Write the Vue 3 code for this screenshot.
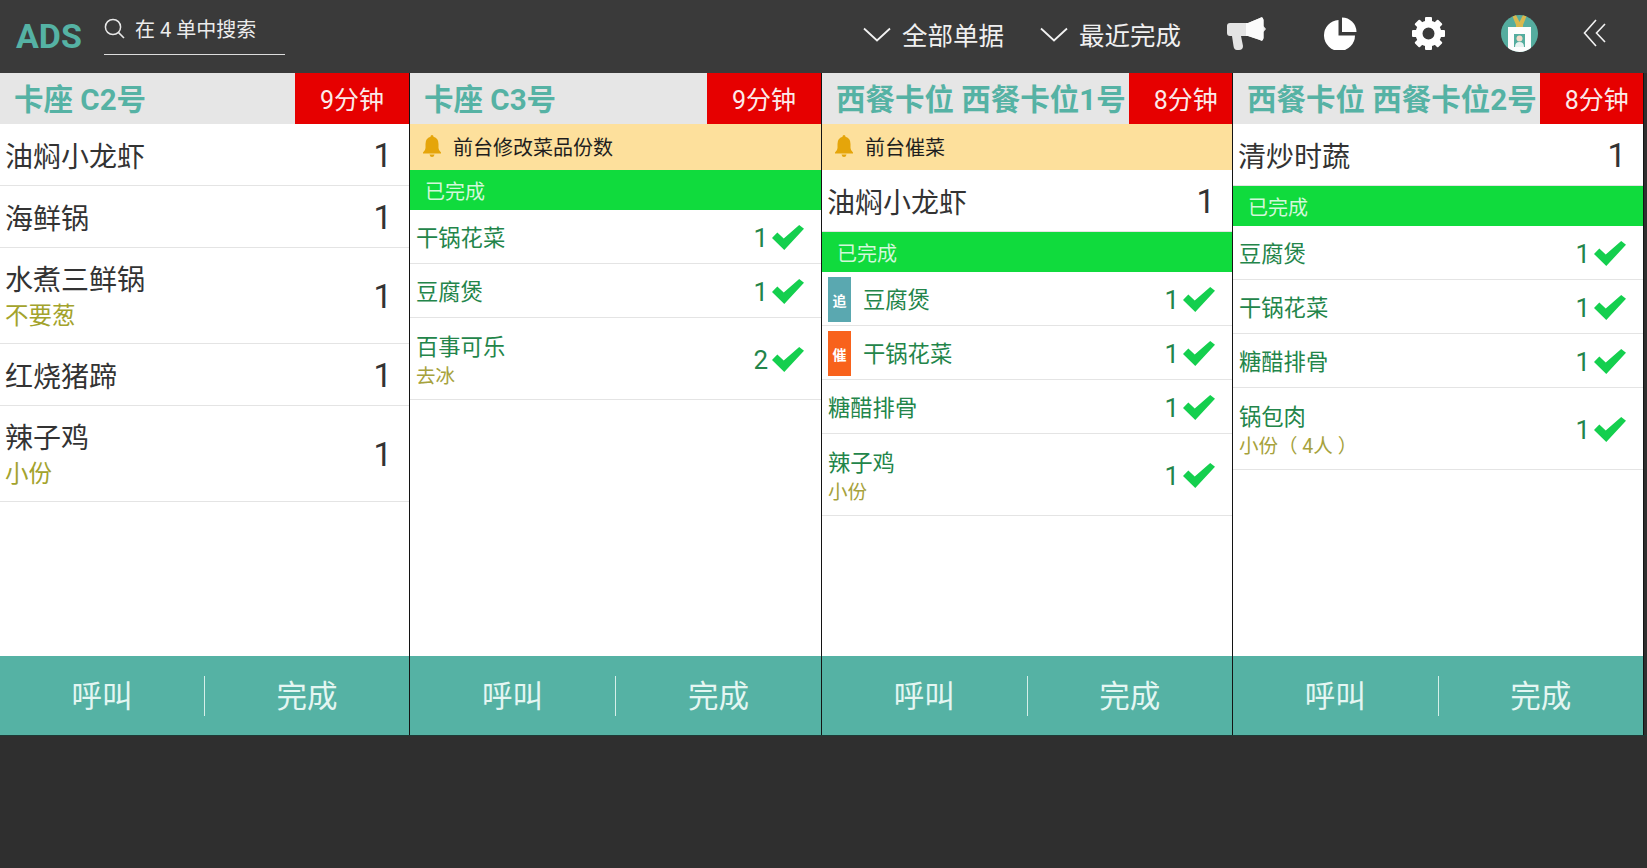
<template>
  <div class="page">
    <header class="topbar">
      <div class="logo">ADS</div>
      <div class="search">
        <svg class="search-icon" width="21" height="22" viewBox="0 0 21 22">
          <circle cx="9" cy="9" r="7.6" fill="none" stroke="#e8e8e8" stroke-width="1.5" />
          <path d="M14.6 14.6 L20 20" stroke="#e8e8e8" stroke-width="1.6" fill="none" />
        </svg>
        <span>在 4 单中搜索</span>
      </div>
      <div class="filters">
        <div class="filter" v-for="f in filters" :key="f">
          <svg width="28" height="15" viewBox="0 0 28 15">
            <path d="M1 1.5 L14 13.5 L27 1.5" fill="none" stroke="#f2f2f2" stroke-width="1.8" />
          </svg>
          <span>{{ f }}</span>
        </div>
      </div>
      <div class="tools">
        <svg class="megaphone" width="40" height="33" viewBox="0 0 40 33">
          <path d="M1 9 Q1 6 4 6 L22 6 L34 1 Q37 -1 37.500 3 L37.500 9 L40 12 L37.500 15 L37.500 21 Q37 25 34 23 L22 19 L15 19 L17 29 Q17 33 13 33 L11 33 Q8 33 7.500 29 L6 19 L4 19 Q1 19 1 16 Z" fill="#e4e4e4" />
          <path d="M20 6 L22 6 L34 1 Q37 -1 37.500 3 L37.500 21 Q37 25 34 23 L22 19 L20 19 Z" fill="#fbfbfb" />
        </svg>
        <svg class="pie" width="33" height="33" viewBox="0 0 33 33">
          <path d="M14.500 3 L14.500 18.500 L31 18.500 A15.500 15.500 0 1 1 14.500 3 Z" fill="#fff" />
          <path d="M18 0.500 A14.500 14.500 0 0 1 32.500 15 L18 15 Z" fill="#fff" />
        </svg>
        <svg class="gear" width="33" height="33" viewBox="0 0 33 33">
          <circle cx="16.500" cy="16.500" r="9.500" fill="none" stroke="#fff" stroke-width="7" />
          <rect
            v-for="a in gearTeeth"
            :key="a"
            x="13"
            y="0"
            width="7"
            height="7"
            rx="1"
            fill="#fff"
            :transform="`rotate(${a} 16.500 16.500)`"
          />
        </svg>
        <svg class="badge" width="37" height="37" viewBox="0 0 37 37">
          <defs>
            <clipPath id="badge-clip"><circle cx="18.500" cy="18.500" r="18.500" /></clipPath>
          </defs>
          <g clip-path="url(#badge-clip)">
            <rect width="37" height="37" fill="#55ad9f" />
            <path d="M11 0 L15 10 L15 13 L22 13 L22 10 L26 0 L22 0 L18.500 7 L15 0 Z" fill="#d9b84e" />
            <rect x="7" y="12" width="23" height="27" fill="#fdfdfd" />
            <rect x="13" y="19" width="11" height="13" fill="#55ad9f" />
            <circle cx="18.500" cy="23.500" r="3" fill="#f3dcc8" />
            <path d="M14 32 Q14 27 18.500 27 Q23 27 23 32 Z" fill="#e8f3f1" />
          </g>
        </svg>
        <svg class="collapse" width="23" height="28" viewBox="0 0 23 28">
          <path d="M13 1 L1.500 14 L13 27 M22 5 L13.500 14 L22 23" fill="none" stroke="#f2f2f2" stroke-width="1.6" />
        </svg>
      </div>
    </header>

    <main class="columns">
      <section class="order" v-for="order in orders" :key="order.title">
        <div class="order-head">
          <div class="order-title">{{ order.title }}</div>
          <div class="order-time">{{ order.time }}</div>
        </div>

        <div class="order-body">
          <div class="notice" v-if="order.notice">
            <svg width="18" height="22" viewBox="0 0 18 22">
              <path d="M9 0 Q10.500 0 10.500 1.800 Q15.500 3 15.500 9 L15.500 13 Q15.500 15.500 18 17.500 L18 18.500 L0 18.500 L0 17.500 Q2.500 15.500 2.500 13 L2.500 9 Q2.500 3 7.500 1.800 Q7.500 0 9 0 Z" fill="#e5a50a" />
              <path d="M6.500 19.500 L11.500 19.500 Q11 22 9 22 Q7 22 6.500 19.500 Z" fill="#e5a50a" />
            </svg>
            <span>{{ order.notice }}</span>
          </div>

          <div class="row big" v-for="item in order.pending" :key="item.name" :class="{ 'has-note': item.note }">
            <div class="row-text">
              <div class="row-name">{{ item.name }}</div>
              <div class="row-note" v-if="item.note">{{ item.note }}</div>
            </div>
            <div class="row-count">{{ item.count }}</div>
          </div>

          <template v-if="order.done">
            <div class="done-bar">已完成</div>
            <div class="row small" v-for="item in order.done" :key="item.name" :class="{ 'has-note': item.note }">
              <span class="tag" v-if="item.tag" :class="item.tagClass">{{ item.tag }}</span>
              <div class="row-text">
                <div class="row-name">{{ item.name }}</div>
                <div class="row-note" v-if="item.note">{{ item.note }}</div>
              </div>
              <div class="row-count">{{ item.count }}</div>
              <svg class="check" width="32" height="25" viewBox="0 0 30 23" preserveAspectRatio="none">
                <path d="M0 12 L5 7 L11 12.500 L25.500 0 L30 3.500 L11.500 23 Z" fill="#14cf4e" />
              </svg>
            </div>
          </template>
        </div>

        <div class="order-foot">
          <button class="foot-btn">呼叫</button>
          <span class="foot-divider"></span>
          <button class="foot-btn">完成</button>
        </div>
      </section>
    </main>
  </div>
</template>

<script setup>
const filters = ['全部单据', '最近完成']
const gearTeeth = [0, 45, 90, 135, 180, 225, 270, 315]

const orders = [
  {
    title: '卡座 C2号',
    time: '9分钟',
    pending: [
      { name: '油焖小龙虾', count: 1 },
      { name: '海鲜锅', count: 1 },
      { name: '水煮三鲜锅', note: '不要葱', count: 1 },
      { name: '红烧猪蹄', count: 1 },
      { name: '辣子鸡', note: '小份', count: 1 },
    ],
  },
  {
    title: '卡座 C3号',
    time: '9分钟',
    notice: '前台修改菜品份数',
    pending: [],
    done: [
      { name: '干锅花菜', count: 1 },
      { name: '豆腐煲', count: 1 },
      { name: '百事可乐', note: '去冰', count: 2 },
    ],
  },
  {
    title: '西餐卡位 西餐卡位1号',
    time: '8分钟',
    notice: '前台催菜',
    pending: [{ name: '油焖小龙虾', count: 1 }],
    done: [
      { name: '豆腐煲', count: 1, tag: '追', tagClass: 'tag-add' },
      { name: '干锅花菜', count: 1, tag: '催', tagClass: 'tag-rush' },
      { name: '糖醋排骨', count: 1 },
      { name: '辣子鸡', note: '小份', count: 1 },
    ],
  },
  {
    title: '西餐卡位 西餐卡位2号',
    time: '8分钟',
    pending: [{ name: '清炒时蔬', count: 1 }],
    done: [
      { name: '豆腐煲', count: 1 },
      { name: '干锅花菜', count: 1 },
      { name: '糖醋排骨', count: 1 },
      { name: '锅包肉', note: '小份（ 4人 ）', count: 1 },
    ],
  },
]
</script>

<style scoped>
.page {
  width: 1647px;
  height: 868px;
  overflow: hidden;
  background: #2f2f2f;
  font-family: Roboto, "Noto Sans CJK SC", sans-serif;
  display: flex;
  flex-direction: column;
}

.topbar {
  height: 73px;
  flex: none;
  background: #3a3a3a;
  display: flex;
  align-items: flex-start;
  padding-left: 16px;
  box-sizing: border-box;
}

.logo {
  width: 88px;
  margin-top: 17px;
  font-size: 34px;
  line-height: 38px;
  font-weight: 700;
  color: #55b2a4;
}

.search {
  width: 181px;
  height: 37px;
  margin-top: 17px;
  border-bottom: 1px solid #dcdcdc;
  display: flex;
  align-items: flex-start;
  gap: 10px;
  font-size: 20px;
  line-height: 26px;
  color: #ececec;
}

.search-icon {
  margin-top: 1px;
}

.filters {
  display: flex;
  gap: 36px;
  margin-left: 578px;
  margin-top: 15px;
}

.filter {
  display: flex;
  align-items: center;
  gap: 11px;
  height: 36px;
  font-size: 25.500px;
  color: #f0f0f0;
}

.filter svg {
  margin-top: 3px;
}

.tools {
  display: flex;
  align-items: flex-start;
  margin-left: 45px;
  margin-top: 17px;
}

.pie {
  margin-left: 58px;
}

.gear {
  margin-left: 55px;
}

.badge {
  margin-left: 56px;
  margin-top: -2px;
}

.collapse {
  margin-left: 45px;
  margin-top: 2px;
}

.columns {
  height: 662px;
  flex: none;
  display: flex;
  border-bottom: 1px solid #1d3b36;
}

.order {
  width: 410px;
  flex: none;
  border-right: 1px solid #141414;
  background: #fff;
  display: flex;
  flex-direction: column;
}

.order:first-child {
  width: 409px;
}

.order:nth-child(2) {
  width: 411px;
}

.order-head {
  height: 51px;
  flex: none;
  display: flex;
}

.order-title {
  flex: 1 0 auto;
  padding-left: 14px;
  padding-right: 3px;
  background: #e6e6e6;
  color: #55b2a4;
  font-size: 29.500px;
  font-weight: 700;
  line-height: 55px;
  white-space: nowrap;
}

.order-time {
  flex: 0 1 114px;
  min-width: 0;
  padding-left: 25px;
  box-sizing: border-box;
  background: #e60000;
  color: #fbeaea;
  font-size: 25px;
  line-height: 55px;
  white-space: nowrap;
}

.order-body {
  flex: 1;
  min-height: 0;
}

.notice {
  height: 46px;
  box-sizing: border-box;
  padding-bottom: 2px;
  background: #fde09c;
  display: flex;
  align-items: center;
  gap: 12px;
  padding-left: 13px;
  color: #1e1e1e;
  font-size: 20px;
}

.done-bar {
  height: 40px;
  background: #10db3d;
  color: #d2f8da;
  font-size: 20px;
  line-height: 44px;
  padding-left: 15px;
}

.row {
  display: flex;
  align-items: center;
  box-sizing: border-box;
  border-bottom: 1px solid #e4e4e4;
  padding-left: 5px;
}

.row-text {
  flex: 1;
  min-width: 0;
}

.row.big {
  height: 62px;
  padding-top: 6px;
  color: #333;
}

.row.big.has-note {
  height: 96px;
  padding-top: 3px;
}

.row.big .row-name {
  font-size: 28px;
  line-height: 38px;
}

.row.big .row-note {
  font-size: 23.500px;
  line-height: 32px;
  color: #a3a32c;
}

.row.big .row-count {
  font-size: 33px;
  padding-right: 17px;
  padding-bottom: 4px;
}

.row.big.has-note .row-count {
  padding-bottom: 1px;
}

.row.small {
  height: 54px;
  padding-left: 6px;
  padding-top: 2px;
}

.row.small.has-note {
  height: 82px;
}

.row.small .row-name {
  font-size: 22.300px;
  line-height: 34px;
  color: #23854a;
}

.row.small .row-note {
  font-size: 19.500px;
  line-height: 26px;
  color: #a6a23c;
}

.row.small .row-count {
  font-size: 26px;
  color: #23854a;
  margin-right: 4px;
}

.check {
  margin-right: 17px;
}

.tag {
  width: 23px;
  height: 45px;
  flex: none;
  margin-right: 12px;
  color: #fff;
  font-size: 14px;
  font-weight: 700;
  line-height: 48px;
  text-align: center;
}

.tag-add {
  background: #5aa8b0;
}

.tag-rush {
  background: #f8621c;
}

.order-foot {
  height: 79px;
  flex: none;
  background: #55b2a4;
  display: flex;
  align-items: center;
}

.foot-btn {
  flex: 1;
  height: 100%;
  padding: 0 0 3px;
  border: none;
  background: transparent;
  color: #e4f6f2;
  font-family: inherit;
  font-size: 30.500px;
}

.foot-divider {
  width: 1px;
  height: 40px;
  background: #d5efe9;
}
</style>
